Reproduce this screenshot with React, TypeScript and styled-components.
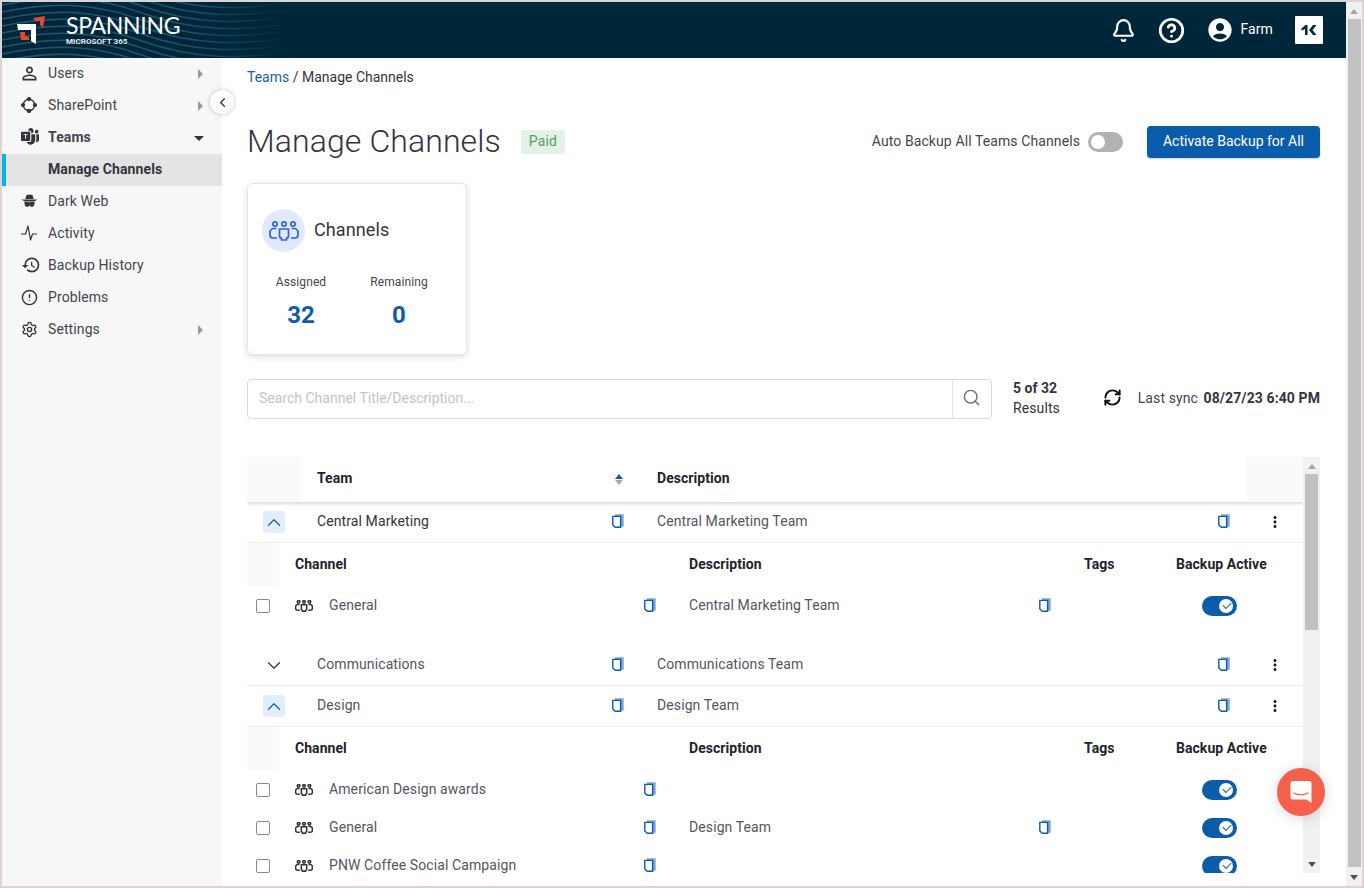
import React from 'react';
import styled, { createGlobalStyle } from 'styled-components';
import { Bell, ChevronDown, ChevronLeft, ChevronUp, CircleAlert, CircleHelp, RefreshCw, Search, Settings } from 'lucide-react';
import { MdAccountCircle, MdHistory, MdMoreVert, MdOutlinePersonOutline } from 'react-icons/md';
import { BsMicrosoftTeams } from 'react-icons/bs';

const GlobalStyle = createGlobalStyle`
  html, body {
    margin: 0;
    padding: 0;
    height: 100%;
    overflow: hidden;
    background: #fff;
  }
  * { box-sizing: border-box; }
  body {
    font-family: Roboto, "Liberation Sans", sans-serif;
    font-size: 14px;
    letter-spacing: 0.1px;
    color: #33343c;
  }
`;

const BLUE = '#0b5cab';

// ---- drawn icons ----

const GroupIcon = ({ width, color }: { width: number; color: string }) => (
  <svg width={width} height={(width * 2) / 3} viewBox="0 0 30 20" fill="none" stroke={color} strokeWidth={width > 20 ? 1.7 : 2.6}>
    <circle cx="6" cy="3" r="2.2" />
    <circle cx="15" cy="3" r="2.2" />
    <circle cx="24" cy="3" r="2.2" />
    <path d="M10.500 8h9v7a2 2 0 0 1-2 2v2h-5v-2a2 2 0 0 1-2-2z" strokeLinejoin="round" />
    <path d="M7.500 7.500H3.500L1 10v4a3 3 0 0 0 3 3h4" strokeLinejoin="round" />
    <path d="M22.500 7.500h4L29 10v4a3 3 0 0 1-3 3h-4" strokeLinejoin="round" />
  </svg>
);

const CopyIcon = () => (
  <CopyGlyph width="12" height="14" viewBox="0 0 12 14">
    <path d="M3 0.300h8.700v12.400H9V3H3z" fill="#7fa5d6" />
    <path d="M.8 2.400h7.800v10.800H3.300L.8 11z" fill="#fff" stroke={BLUE} strokeWidth="1.400" />
  </CopyGlyph>
);

const SharePointIcon = () => (
  <svg width="16" height="16" viewBox="0 0 18 18" fill="none" stroke="#33343c" strokeWidth="1.500">
    <circle cx="9" cy="9" r="6.500" />
    <circle cx="9" cy="2.300" r="1.600" fill="#33343c" />
    <circle cx="9" cy="15.700" r="1.600" fill="#33343c" />
    <circle cx="2.300" cy="9" r="1.600" fill="#33343c" />
    <circle cx="15.700" cy="9" r="1.600" fill="#33343c" />
  </svg>
);

const SpyIcon = () => (
  <svg width="17" height="14" viewBox="0 0 18 14" fill="#33343c">
    <path d="M6 .5h6l1.500 4.500h-9z" />
    <path d="M.5 5.500h17l-3.500 2H4z" />
    <path d="M3.500 8h4.300l1.200.6 1.200-.6h4.300l-.6 3.600c-.3 1-1 1.400-2 1.400h-1.200c-.9 0-1.400-.5-1.700-1.800-.3 1.300-.8 1.800-1.700 1.800H6.100c-1 0-1.700-.4-2-1.400z" />
  </svg>
);

const PulseIcon = () => (
  <svg width="16" height="18" viewBox="0 0 16 18" fill="none" stroke="#33343c" strokeWidth="1.200" strokeLinejoin="round">
    <path d="M0 10h4.500L7 2l2.500 14 2-6H16" />
  </svg>
);

const BrandMark = () => (
  <svg width="34" height="32" viewBox="0 0 34 32">
    <polygon points="0,10 19,10 19,30 14,27 14,16 1,16" fill="#fff" />
    <polygon points="16,4 28,2 26,14 23,11 23,7 18,7" fill="#e8452f" />
    <polygon points="3,18 8,18 8,22 12,23 12,26 4,26" fill="#e8452f" />
  </svg>
);

const VendorMark = () => (
  <svg width="28" height="28" viewBox="0 0 28 28">
    <rect width="28" height="28" rx="1" fill="#fff" />
    <polygon points="6,13 10.500,9 12.500,9 12.500,19 10,19 10,13 7,14.500" fill="#00263a" />
    <polygon points="21.500,9 18,9 14,14 18,19 21.500,19 17.500,14" fill="#00263a" />
  </svg>
);

const ChatIcon = () => (
  <svg width="22" height="24" viewBox="0 0 22 24">
    <path d="M3 1h16a2.500 2.500 0 0 1 2.500 2.500V23l-5-3.500H3A2.500 2.500 0 0 1 .5 17V3.500A2.500 2.500 0 0 1 3 1z" fill="#fff" />
    <path d="M4 13c4 2.500 10 2.500 14 0" fill="none" stroke="#f4604a" strokeWidth="1.300" strokeLinecap="round" />
  </svg>
);

const WAVES = [-32, -25, -18, -11, -4, 3, 10, 17, 24, 31, 38, 45, 52];

const HeaderWaves = () => (
  <WaveArt viewBox="0 0 300 56" preserveAspectRatio="none">
    <defs>
      <linearGradient id="waveFade" gradientUnits="userSpaceOnUse" x1="0" x2="300" y1="0" y2="0">
        <stop offset="0" stopColor="#25576e" />
        <stop offset="0.65" stopColor="#1f5068" />
        <stop offset="0.95" stopColor="#00263a" />
      </linearGradient>
    </defs>
    {WAVES.map((y) => (
      <path
        key={y}
        d={`M0 ${y + 14}C50 ${y + 4} 90 ${y + 4} 140 ${y + 22}S240 ${y + 42} 300 ${y + 30}`}
        fill="none"
        stroke="url(#waveFade)"
        strokeWidth="1.500"
      />
    ))}
  </WaveArt>
);

// ---- data ----

const navItems = [
  { label: 'Users', icon: <UserGlyph size={21} />, arrow: 'right' },
  { label: 'SharePoint', icon: <SharePointIcon />, arrow: 'right' },
  { label: 'Teams', icon: <BsMicrosoftTeams size={18} />, arrow: 'down', bold: true },
  { label: 'Manage Channels', active: true },
  { label: 'Dark Web', icon: <SpyIcon /> },
  { label: 'Activity', icon: <PulseIcon /> },
  { label: 'Backup History', icon: <MdHistory size={20} /> },
  { label: 'Problems', icon: <CircleAlert size={17} strokeWidth={2} /> },
  { label: 'Settings', icon: <Settings size={17} strokeWidth={1.9} />, arrow: 'right' },
];

const teams = [
  {
    name: 'Central Marketing',
    description: 'Central Marketing Team',
    open: true,
    dark: true,
    channels: [{ name: 'General', description: 'Central Marketing Team' }],
  },
  { name: 'Communications', description: 'Communications Team', open: false, channels: [] },
  {
    name: 'Design',
    description: 'Design Team',
    open: true,
    channels: [
      { name: 'American Design awards', description: '' },
      { name: 'General', description: 'Design Team' },
      { name: 'PNW Coffee Social Campaign', description: '' },
    ],
  },
];

// ---- page ----

export default function App() {
  return (
    <Frame>
      <GlobalStyle />
      <Page>
        <Header>
          <HeaderWaves />
          <Brand>
            <BrandMark />
            <BrandText>
              <BrandName>SPANNING</BrandName>
              <BrandSub>MICROSOFT 365</BrandSub>
            </BrandText>
          </Brand>
          <HeaderActions>
            <Bell size={25} strokeWidth={2} />
            <CircleHelp size={27} strokeWidth={2.4} />
            <UserChip>
              <MdAccountCircle size={28} />
              Farm
            </UserChip>
            <VendorMark />
          </HeaderActions>
        </Header>
        <Body>
          <Sidebar>
            {navItems.map((item) => (
              <NavRow key={item.label} $active={item.active}>
                <NavIcon>{item.icon}</NavIcon>
                <NavLabel $bold={item.bold || item.active}>{item.label}</NavLabel>
                {item.arrow === 'right' && <ArrowRight />}
                {item.arrow === 'down' && <ArrowDown />}
              </NavRow>
            ))}
          </Sidebar>
          <CollapseButton>
            <ChevronLeft size={15} strokeWidth={2} />
          </CollapseButton>
          <Main>
            <Breadcrumb>
              <a>Teams</a> / Manage Channels
            </Breadcrumb>
            <TitleRow>
              <Title>Manage Channels</Title>
              <PaidBadge>Paid</PaidBadge>
              <AutoBackup>
                <AutoLabel>Auto Backup All Teams Channels</AutoLabel>
                <Toggle $on={false} />
              </AutoBackup>
              <PrimaryButton>Activate Backup for All</PrimaryButton>
            </TitleRow>
            <StatCard>
              <StatHead>
                <StatCircle>
                  <GroupIcon width={30} color="#2f62e6" />
                </StatCircle>
                <StatTitle>Channels</StatTitle>
              </StatHead>
              <StatValues>
                <Stat>
                  <StatLabel>Assigned</StatLabel>
                  <StatNumber>32</StatNumber>
                </Stat>
                <Stat>
                  <StatLabel>Remaining</StatLabel>
                  <StatNumber>0</StatNumber>
                </Stat>
              </StatValues>
            </StatCard>
            <SearchRow>
              <SearchBox>
                <SearchInput placeholder="Search Channel Title/Description..." />
                <SearchButton>
                  <Search size={19} strokeWidth={1.8} />
                </SearchButton>
              </SearchBox>
              <ResultCount>
                <b>5 of 32</b>
                <span>Results</span>
              </ResultCount>
              <SyncIcon>
                <RefreshCw size={19} strokeWidth={2.5} />
              </SyncIcon>
              <LastSync>
                Last sync <b>08/27/23 6:40 PM</b>
              </LastSync>
            </SearchRow>
            <TableWrap>
              <TableBody>
                <TableHead>
                  <HeadFiller />
                  <HeadCell>
                    <HeadLabel>Team</HeadLabel>
                    <SortIcon>
                      <i />
                      <em />
                    </SortIcon>
                  </HeadCell>
                  <HeadCell>
                    <HeadLabel>Description</HeadLabel>
                  </HeadCell>
                  <HeadFiller />
                </TableHead>
                {teams.map((team) => (
                  <React.Fragment key={team.name}>
                    <TeamRow $spaced={team.name === 'Communications'}>
                      <ExpandCell>
                        <ExpandButton $open={team.open}>
                          {team.open ? <ChevronUp size={23} strokeWidth={1.3} /> : <ChevronDown size={23} strokeWidth={1.3} />}
                        </ExpandButton>
                      </ExpandCell>
                      <TeamCell $dark={team.dark}>
                        {team.name}
                        <CopyIcon />
                      </TeamCell>
                      <TeamCell>
                        {team.description}
                        <CopyIcon />
                      </TeamCell>
                      <KebabCell>
                        <MdMoreVert size={18} />
                      </KebabCell>
                    </TeamRow>
                    {team.open && (
                      <ChannelHead>
                        <ChannelFiller />
                        <span>Channel</span>
                        <span>Description</span>
                        <span>Tags</span>
                        <span>Backup Active</span>
                      </ChannelHead>
                    )}
                    {team.channels.map((channel) => (
                      <ChannelRow key={channel.name}>
                        <CheckCell>
                          <Checkbox />
                        </CheckCell>
                        <ChannelName>
                          <GroupIcon width={18} color="#33343c" />
                          <ChannelTitle>{channel.name}</ChannelTitle>
                          <CopyIcon />
                        </ChannelName>
                        <ChannelDescription>
                          <ChannelText>{channel.description}</ChannelText>
                          {channel.description && <CopyIcon />}
                        </ChannelDescription>
                        <span />
                        <ToggleCell>
                          <Toggle $on />
                        </ToggleCell>
                      </ChannelRow>
                    ))}
                  </React.Fragment>
                ))}
              </TableBody>
              <Scrollbar $inner>
                <ScrollUp />
                <ScrollThumb $height={156} />
                <ScrollSpacer />
                <ScrollDown />
              </Scrollbar>
            </TableWrap>
          </Main>
          <ChatFab>
            <ChatIcon />
          </ChatFab>
        </Body>
      </Page>
      <Scrollbar>
        <ScrollUp />
        <ScrollThumb $height={848} />
        <ScrollSpacer />
        <ScrollDown />
      </Scrollbar>
    </Frame>
  );
}

function UserGlyph({ size }: { size: number }) {
  return <UserGlyphIcon size={size} />;
}

const UserGlyphIcon = styled(MdOutlinePersonOutline)`
  margin-left: -2px;
`;

const Frame = styled.div`
  width: 1364px;
  height: 888px;
  border: 2px solid #ddd5d5;
  display: flex;
  overflow: hidden;
  background: #fff;
`;

const Page = styled.div`
  width: 1344px;
  height: 100%;
  display: flex;
  flex-direction: column;
`;

const Scrollbar = styled.div<{ $inner?: boolean }>`
  width: ${(p) => (p.$inner ? '17px' : '16px')};
  flex: none;
  background: #f1f1f1;
  display: flex;
  flex-direction: column;
  align-items: center;
  height: 100%;
`;

const ScrollUp = styled.div`
  flex: none;
  margin: 7px 0 5px;
  border-left: 4px solid transparent;
  border-right: 4px solid transparent;
  border-bottom: 5px solid #a3a3a3;
`;

const ScrollDown = styled.div`
  flex: none;
  margin: 5px 0 6px;
  border-left: 4px solid transparent;
  border-right: 4px solid transparent;
  border-top: 5px solid #505050;
`;

const ScrollThumb = styled.div<{ $height: number }>`
  flex: none;
  width: 13px;
  height: ${(p) => p.$height}px;
  background: #c1c1c1;
`;

const ScrollSpacer = styled.div`
  flex: 1;
`;

const CopyGlyph = styled.svg`
  flex: none;
  margin-bottom: 2px;
`;

const Header = styled.header`
  position: relative;
  flex: none;
  height: 56px;
  background: #00263a;
  display: flex;
  align-items: center;
  justify-content: space-between;
  overflow: hidden;
`;

const WaveArt = styled.svg`
  position: absolute;
  left: 0;
  top: 0;
  width: 300px;
  height: 56px;
`;

const Brand = styled.div`
  position: relative;
  display: flex;
  align-items: center;
  gap: 15px;
  padding-left: 15px;
`;

const BrandText = styled.div`
  display: flex;
  flex-direction: column;
  color: #fff;
  padding-bottom: 2px;
`;

const BrandName = styled.span`
  font-family: Lato, Roboto, sans-serif;
  font-size: 23px;
  line-height: 24px;
  letter-spacing: -0.3px;
`;

const BrandSub = styled.span`
  font-size: 8px;
  line-height: 9px;
  font-weight: 500;
`;

const HeaderActions = styled.div`
  display: flex;
  align-items: center;
  color: #fff;
  padding-right: 23px;
  gap: 22px;
`;

const UserChip = styled.div`
  display: flex;
  align-items: center;
  gap: 6px;
  padding-bottom: 2px;
  font-size: 14px;
  margin-left: -1px;
  svg {
    margin-top: 2px;
  }
`;

const Body = styled.div`
  position: relative;
  flex: 1;
  min-height: 0;
  display: flex;
`;

const Sidebar = styled.nav`
  flex: none;
  width: 220px;
  background: #f7f7f7;
`;

const NavRow = styled.div<{ $active?: boolean }>`
  height: 32px;
  display: flex;
  align-items: center;
  padding-right: 19px;
  padding-bottom: 2px;
  color: ${(p) => (p.$active ? '#33343c' : '#44454f')};
  background: ${(p) => (p.$active ? '#e4e4e4' : 'transparent')};
  box-shadow: ${(p) => (p.$active ? 'inset 4px 0 0 #00b5ef' : 'none')};
`;

const NavIcon = styled.span`
  width: 46px;
  flex: none;
  padding-left: 19px;
  display: flex;
  align-items: center;
  justify-content: flex-start;
  color: #33343c;
`;

const NavLabel = styled.span<{ $bold?: boolean }>`
  flex: 1;
  font-weight: ${(p) => (p.$bold ? 700 : 400)};
`;

const ArrowRight = styled.i`
  margin-top: 2px;
  border-top: 5px solid transparent;
  border-bottom: 5px solid transparent;
  border-left: 5px solid #9a9a9a;
`;

const ArrowDown = styled.i`
  margin: 2px -1px 0 0;
  border-left: 5px solid transparent;
  border-right: 5px solid transparent;
  border-top: 5px solid #33343c;
`;

const CollapseButton = styled.div`
  position: absolute;
  left: 208px;
  top: 32px;
  width: 24px;
  height: 24px;
  border-radius: 50%;
  background: #fff;
  box-shadow: 0 0 4px rgba(0, 0, 0, 0.25);
  display: flex;
  align-items: center;
  justify-content: center;
  color: #33343c;
`;

const Main = styled.main`
  flex: 1;
  min-width: 0;
  padding: 0 26px 0 25px;
  display: flex;
  flex-direction: column;
`;

const Breadcrumb = styled.div`
  height: 38px;
  line-height: 38px;
  letter-spacing: 0;
  a {
    color: #1f5e9e;
  }
`;

const TitleRow = styled.div`
  margin-top: 30px;
  height: 32px;
  display: flex;
  align-items: center;
`;

const Title = styled.h1`
  margin: 0 0 2px;
  font-size: 32px;
  font-weight: 300;
  color: #33343c;
  letter-spacing: 0.1px;
`;

const PaidBadge = styled.span`
  margin-left: 20px;
  width: 44px;
  height: 24px;
  line-height: 23px;
  text-align: center;
  background: #e3f1e6;
  color: #5c9c62;
  font-size: 14px;
  border-radius: 2px;
`;

const AutoBackup = styled.div`
  margin-left: auto;
  display: flex;
  align-items: center;
  gap: 8px;
  color: #44454f;
`;

const AutoLabel = styled.span`
  margin-bottom: 2px;
`;

const Toggle = styled.span<{ $on: boolean }>`
  position: relative;
  display: inline-block;
  flex: none;
  width: 35px;
  height: 20px;
  border-radius: 10px;
  background: ${(p) => (p.$on ? BLUE : '#b2b2b2')};
  &::before {
    content: '';
    position: absolute;
    top: 3px;
    left: ${(p) => (p.$on ? '17px' : '3px')};
    width: 14px;
    height: 14px;
    border-radius: 50%;
    background: #fff;
  }
  &::after {
    content: '';
    display: ${(p) => (p.$on ? 'block' : 'none')};
    position: absolute;
    left: 21px;
    top: 6px;
    width: 7px;
    height: 4px;
    border-left: 1.3px solid ${BLUE};
    border-bottom: 1.3px solid ${BLUE};
    transform: rotate(-45deg);
  }
`;

const PrimaryButton = styled.button`
  margin-left: 24px;
  width: 173px;
  height: 32px;
  padding: 0 0 2px;
  border: none;
  border-radius: 4px;
  background: ${BLUE};
  color: #fff;
  font-family: inherit;
  font-size: 14px;
  font-weight: 400;
  letter-spacing: 0;
  box-shadow: 0 1px 2px rgba(11, 92, 171, 0.25);
`;

const StatCard = styled.section`
  margin-top: 25px;
  width: 220px;
  height: 172px;
  border: 1px solid #e6e6e6;
  border-radius: 6px;
  box-shadow: 0 2px 6px rgba(0, 0, 0, 0.14);
  padding: 25px 14px 0;
`;

const StatHead = styled.div`
  display: flex;
  align-items: center;
  gap: 9px;
`;

const StatTitle = styled.span`
  font-size: 18px;
  margin-bottom: 2px;
  color: #33343c;
`;

const StatCircle = styled.span`
  width: 43px;
  height: 43px;
  border-radius: 50%;
  background: #e1e9fa;
  display: flex;
  align-items: center;
  justify-content: center;
`;

const StatValues = styled.div`
  margin-top: 22px;
  display: grid;
  grid-template-columns: 78px 118px;
`;

const Stat = styled.div`
  display: flex;
  flex-direction: column;
  align-items: center;
`;

const StatLabel = styled.span`
  font-size: 12px;
  color: #44454f;
  line-height: 16px;
`;

const StatNumber = styled.span`
  margin-top: 8px;
  font-size: 24px;
  line-height: 34px;
  font-weight: 700;
  color: ${BLUE};
`;

const SearchRow = styled.div`
  margin-top: 24px;
  height: 40px;
  display: flex;
  align-items: center;
`;

const SearchBox = styled.div`
  width: 745px;
  height: 40px;
  display: flex;
  border: 1px solid #d9d9d9;
  border-radius: 4px;
`;

const SearchInput = styled.input`
  flex: 1;
  min-width: 0;
  border: none;
  outline: none;
  padding: 0 11px 2px;
  font-family: inherit;
  font-size: 14px;
  background: transparent;
  &::placeholder {
    color: #c4c4c4;
  }
`;

const SearchButton = styled.span`
  width: 39px;
  flex: none;
  padding: 0 2px 3px 0;
  border-left: 1px solid #e4e4e4;
  display: flex;
  align-items: center;
  justify-content: center;
  color: #6e6e6e;
`;

const ResultCount = styled.div`
  margin-left: 21px;
  padding-bottom: 2px;
  display: flex;
  flex-direction: column;
  line-height: 20px;
  b {
    font-weight: 700;
    letter-spacing: 0;
  }
`;

const SyncIcon = styled.span`
  margin: 0 0 3px 43px;
  display: flex;
  color: #111;
`;

const LastSync = styled.div`
  margin-left: auto;
  padding-bottom: 2px;
  color: #44454f;
  white-space: pre;
  b {
    margin-left: 2px;
    color: #33343c;
    font-weight: 700;
    letter-spacing: 0.1px;
  }
`;

const TableWrap = styled.div`
  margin-top: 38px;
  height: 416px;
  display: flex;
`;

const TableBody = styled.div`
  flex: 1;
  min-width: 0;
  overflow: hidden;
`;

const TableHead = styled.div`
  height: 45px;
  display: grid;
  grid-template-columns: 54px 340px 1fr 57px;
  box-shadow: 0 2px 3px rgba(0, 0, 0, 0.14);
  position: relative;
`;

const HeadFiller = styled.div`
  background: #fafafa;
`;

const HeadCell = styled.div`
  display: flex;
  align-items: center;
  justify-content: space-between;
  padding: 0 18px 0 16px;
`;

const HeadLabel = styled.span`
  margin-bottom: 4px;
  font-weight: 700;
  letter-spacing: 0.05px;
  color: #22232b;
`;

const SortIcon = styled.span`
  display: flex;
  flex-direction: column;
  gap: 1px;
  i {
    border-left: 4px solid transparent;
    border-right: 4px solid transparent;
    border-bottom: 5px solid ${BLUE};
  }
  em {
    border-left: 4px solid transparent;
    border-right: 4px solid transparent;
    border-top: 5px solid #a8a8a8;
  }
`;

const TeamRow = styled.div<{ $spaced?: boolean }>`
  height: 41px;
  margin-top: ${(p) => (p.$spaced ? '20px' : '0')};
  display: grid;
  grid-template-columns: 54px 340px 606px 57px;
  align-items: center;
  border-bottom: 1px solid #eceef0;
  color: #55565f;
`;

const ExpandCell = styled.div`
  display: flex;
  justify-content: center;
`;

const ExpandButton = styled.span<{ $open?: boolean }>`
  width: 22px;
  height: 22px;
  border-radius: 2px;
  display: flex;
  align-items: center;
  justify-content: center;
  background: ${(p) => (p.$open ? '#e1eefa' : 'transparent')};
  color: ${(p) => (p.$open ? BLUE : '#33343c')};
`;

const TeamCell = styled.div<{ $dark?: boolean }>`
  display: flex;
  align-items: center;
  justify-content: space-between;
  padding: 0 17px 2px 16px;
  color: ${(p) => (p.$dark ? '#33343c' : 'inherit')};
  svg {
    margin-bottom: 0;
  }
`;

const KebabCell = styled.div`
  display: flex;
  justify-content: center;
  color: #14202c;
  padding-right: 2px;
`;

const ChannelHead = styled.div`
  height: 44px;
  padding-bottom: 2px;
  display: grid;
  grid-template-columns: 32px 394px 395px 92px 1fr;
  align-items: center;
  font-weight: 700;
  letter-spacing: 0.05px;
  color: #22232b;
  span {
    padding-left: 16px;
  }
`;

const ChannelFiller = styled.div`
  background: #fafafa;
  align-self: stretch;
  margin-bottom: -2px;
`;

const ChannelRow = styled.div`
  height: 38px;
  display: grid;
  grid-template-columns: 32px 394px 395px 92px 1fr;
  align-items: center;
  color: #55565f;
`;

const CheckCell = styled.div`
  display: flex;
  justify-content: center;
`;

const Checkbox = styled.span`
  width: 14px;
  height: 14px;
  border: 1px solid #8a8a8a;
  border-radius: 2px;
  background: #fff;
`;

const ChannelName = styled.div`
  display: flex;
  align-items: center;
  padding: 0 17px 0 16px;
`;

const ChannelTitle = styled.span`
  flex: 1;
  margin: 0 0 2px 16px;
`;

const ChannelText = styled.span`
  margin-bottom: 2px;
`;

const ChannelDescription = styled.div`
  display: flex;
  align-items: center;
  justify-content: space-between;
  padding: 0 17px 0 16px;
`;

const ToggleCell = styled.div`
  display: flex;
  padding-left: 42px;
`;

const ChatFab = styled.div`
  position: absolute;
  left: 1275px;
  top: 710px;
  width: 48px;
  height: 48px;
  border-radius: 50%;
  background: #f4604a;
  box-shadow: 0 2px 14px rgba(0, 0, 0, 0.16);
  display: flex;
  align-items: center;
  justify-content: center;
`;
